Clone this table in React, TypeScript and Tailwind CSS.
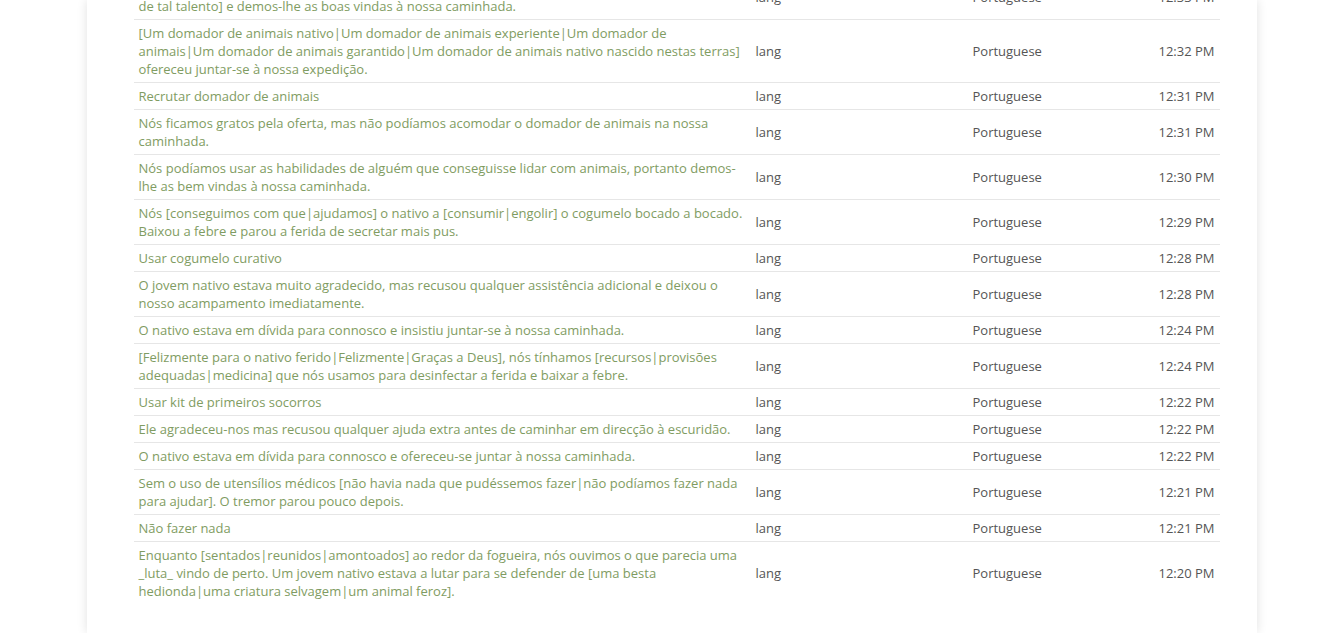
import React from "react";

type Row = { lines: string[]; time: string };

const rows: Row[] = [
  {
    lines: [
      "Nós [precisávamos de alguém com as suas habilidades|não podíamos recusar alguém",
      "de tal talento] e demos-lhe as boas vindas à nossa caminhada.",
    ],
    time: "12:33 PM",
  },
  {
    lines: [
      "[Um domador de animais nativo|Um domador de animais experiente|Um domador de",
      "animais|Um domador de animais garantido|Um domador de animais nativo nascido nestas terras]",
      "ofereceu juntar-se à nossa expedição.",
    ],
    time: "12:32 PM",
  },
  { lines: ["Recrutar domador de animais"], time: "12:31 PM" },
  {
    lines: [
      "Nós ficamos gratos pela oferta, mas não podíamos acomodar o domador de animais na nossa",
      "caminhada.",
    ],
    time: "12:31 PM",
  },
  {
    lines: [
      "Nós podíamos usar as habilidades de alguém que conseguisse lidar com animais, portanto demos-",
      "lhe as bem vindas à nossa caminhada.",
    ],
    time: "12:30 PM",
  },
  {
    lines: [
      "Nós [conseguimos com que|ajudamos] o nativo a [consumir|engolir] o cogumelo bocado a bocado.",
      "Baixou a febre e parou a ferida de secretar mais pus.",
    ],
    time: "12:29 PM",
  },
  { lines: ["Usar cogumelo curativo"], time: "12:28 PM" },
  {
    lines: [
      "O jovem nativo estava muito agradecido, mas recusou qualquer assistência adicional e deixou o",
      "nosso acampamento imediatamente.",
    ],
    time: "12:28 PM",
  },
  {
    lines: ["O nativo estava em dívida para connosco e insistiu juntar-se à nossa caminhada."],
    time: "12:24 PM",
  },
  {
    lines: [
      "[Felizmente para o nativo ferido|Felizmente|Graças a Deus], nós tínhamos [recursos|provisões",
      "adequadas|medicina] que nós usamos para desinfectar a ferida e baixar a febre.",
    ],
    time: "12:24 PM",
  },
  { lines: ["Usar kit de primeiros socorros"], time: "12:22 PM" },
  {
    lines: ["Ele agradeceu-nos mas recusou qualquer ajuda extra antes de caminhar em direcção à escuridão."],
    time: "12:22 PM",
  },
  {
    lines: ["O nativo estava em dívida para connosco e ofereceu-se juntar à nossa caminhada."],
    time: "12:22 PM",
  },
  {
    lines: [
      "Sem o uso de utensílios médicos [não havia nada que pudéssemos fazer|não podíamos fazer nada",
      "para ajudar]. O tremor parou pouco depois.",
    ],
    time: "12:21 PM",
  },
  { lines: ["Não fazer nada"], time: "12:21 PM" },
  {
    lines: [
      "Enquanto [sentados|reunidos|amontoados] ao redor da fogueira, nós ouvimos o que parecia uma",
      "_luta_ vindo de perto. Um jovem nativo estava a lutar para se defender de [uma besta",
      "hedionda|uma criatura selvagem|um animal feroz].",
    ],
    time: "12:20 PM",
  },
];

export default function App() {
  return (
    <div
      className="min-h-[633px] h-[633px] overflow-hidden bg-white"
      style={{ fontFamily: '"Open Sans", "Noto Sans", sans-serif' }}
    >
      <div className="w-[1170px] mx-auto h-[633px] bg-white shadow-[0_0_10px_rgba(0,0,0,0.12)] pl-[47px] pr-[37px] overflow-hidden">
        <table className="w-[1086px] border-collapse table-fixed -mt-[25px] text-[13px] leading-[18px]">
          <colgroup>
            <col className="w-[617px]" />
            <col className="w-[217px]" />
            <col className="w-[140px]" />
            <col />
          </colgroup>
          <tbody>
            {rows.map((r, i) => (
              <tr key={i} className={i === 0 ? "" : "border-t border-[#e6e6e6]"}>
                <td className="px-[5px] py-[4px] text-[#7f9c62] align-middle whitespace-nowrap">
                  {r.lines.map((l, j) => (
                    <div key={j}>{l}</div>
                  ))}
                </td>
                <td className="px-[5px] py-[4px] text-[#555555] align-middle">lang</td>
                <td className="px-[5px] py-[4px] text-[#555555] align-middle">Portuguese</td>
                <td className="px-[5px] py-[4px] text-[#555555] align-middle text-right">{r.time}</td>
              </tr>
            ))}
          </tbody>
        </table>
      </div>
    </div>
  );
}
